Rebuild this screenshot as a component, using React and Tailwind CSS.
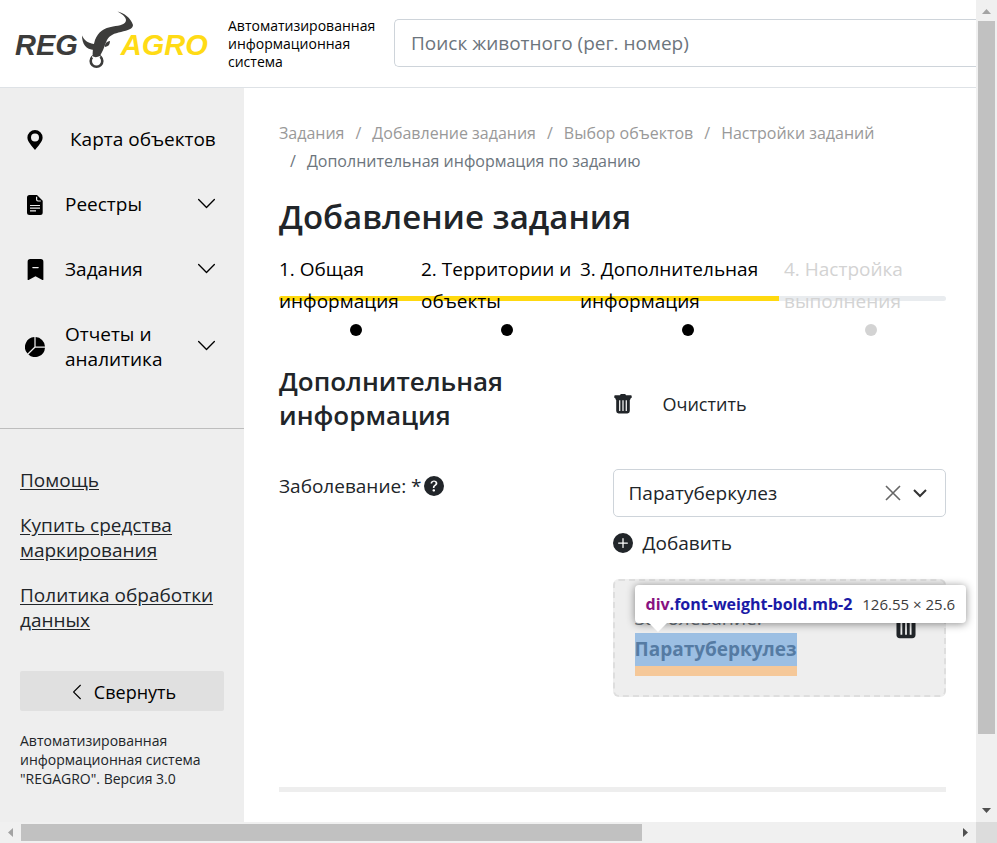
import {
  BsBookmarkDashFill,
  BsChevronDown,
  BsChevronLeft,
  BsPieChartFill,
  BsPlusCircleFill,
  BsQuestionCircleFill,
} from "react-icons/bs";

function PinIcon() {
  return (
    <svg width="20" height="20" viewBox="0 0 20 20" fill="currentColor" aria-hidden="true">
      <path
        fillRule="evenodd"
        d="M10 0a7.6 7.6 0 0 0-7.6 7.6C2.4 12 7 16 10 20c3-4 7.600-8 7.600-12.400A7.600 7.600 0 0 0 10 0Zm0 3.400a4 4 0 1 1 0 8 4 4 0 0 1 0-8Z"
      />
    </svg>
  );
}

function FileIcon() {
  return (
    <svg width="20" height="20" viewBox="0 0 20 20" aria-hidden="true">
      <path d="M4.500 0H12l5.700 5.700V17.500a2.500 2.500 0 0 1-2.500 2.500H4.500A2.500 2.500 0 0 1 2 17.500v-15A2.500 2.500 0 0 1 4.500 0Z" fill="#000" />
      <path d="M11.600 1.800v2.800c0 .8.600 1.400 1.400 1.400h2.800" stroke="#eee" strokeWidth="1.200" fill="none" />
      <path d="M5 10.500h10M5 13.200h10M5 15.900h6" stroke="#eee" strokeWidth="1.200" />
    </svg>
  );
}

function TrashIcon({ size }) {
  return (
    <svg width={size} height={size} viewBox="0 0 20 20" aria-hidden="true" className="shrink-0">
      <path d="M7 1.200C7.200.4 7.800 0 8.600 0h2.800c.8 0 1.400.4 1.600 1.200h4.900c.5 0 .8.300.8.800v1.400c0 .4-.3.700-.8.700L17 6H3l-.9-1.900c-.5 0-.8-.3-.8-.7V2c0-.5.300-.8.800-.8Z" fill="#212529" />
      <path d="M3.200 4h13.600v13a2.400 2.400 0 0 1-2.400 2.400H5.600A2.400 2.400 0 0 1 3.200 17Z" fill="#212529" />
      <path d="M6.700 6.200V17M10 6.200V17M13.300 6.200V17" stroke="#eee" strokeWidth="1.300" />
    </svg>
  );
}

function Logo() {
  return (
    <a
      href="#"
      aria-label="REGAGRO"
      className="flex w-[213px] shrink-0 items-center font-['Liberation_Sans',Arial,sans-serif] text-[29px] leading-none font-bold italic"
    >
      <span className="mt-1 text-[#3c3c3b]">REG</span>
      <svg width="54" height="60" viewBox="0 0 54 60" className="mr-[-14px] mb-[6px] ml-[3px] shrink-0" aria-hidden="true">
        <path
          fill="#3c3c3b"
          d="M36.500 1.500C43 3 50 8 52 15c0 4-5 5-12 7-7 1.500-11 3-14 8-2 4-3 9-6 14l-2 4h-6c-1-5 0-12 2-18 3-8 9-12 18-13.500 7-1 13-2 13-6.500 0-3-4-6-8.500-8.500Z"
        />
        <path fill="#3c3c3b" d="M1 25.500c2 4 5 7.500 12 8.500v6C5 39.500 1 34 1 25.500Z" />
        <path fill="#3c3c3b" d="M29 31c0 3.500-1.500 5.500-5 6-.5-3 1.500-5.500 5-6Z" />
        <circle cx="15.500" cy="51" r="5.800" fill="none" stroke="#3c3c3b" strokeWidth="2.600" />
        <path fill="#fff" d="M11 46c2.500 1.500 5 1.500 8 0l.5 1c-2.500 2-6 2-8.500.5Z" />
      </svg>
      <span className="mt-1 text-[#ffdb15]">AGRO</span>
    </a>
  );
}

function NavItem({ icon, children, expandable = true }) {
  return (
    <li>
      <button type="button" className="flex w-full items-center py-5 pr-[27px] pl-[25px] text-left text-[19px] leading-[25px] text-black">
        <span className="flex w-5 shrink-0 justify-center">{icon}</span>
        <span className={expandable ? "ml-5 flex-1" : "ml-[25px] flex-1 whitespace-nowrap"}>{children}</span>
        {expandable && <BsChevronDown size={21} className="mb-[3px] shrink-0" />}
      </button>
    </li>
  );
}

function Sidebar() {
  return (
    <aside className="w-[244px] shrink-0 bg-[#eee] pt-[19px]">
      <nav>
        <ul>
          <NavItem icon={<PinIcon />} expandable={false}>Карта объектов</NavItem>
          <NavItem icon={<FileIcon />}>Реестры</NavItem>
          <NavItem icon={<BsBookmarkDashFill size={21} className="shrink-0" />}>Задания</NavItem>
          <NavItem icon={<BsPieChartFill size={20} />}>Отчеты и аналитика</NavItem>
        </ul>
      </nav>
      <div className="mt-9 border-t border-[#bdbdbd] px-5 pt-[39px]">
        <div className="flex flex-col items-start gap-5 text-[19px] leading-[25px] underline underline-offset-2">
          <a href="#">Помощь</a>
          <a href="#">Купить средства маркирования</a>
          <a href="#">Политика обработки данных</a>
        </div>
        <button type="button" className="mt-[38px] flex h-10 w-full items-center justify-center gap-2 rounded-xs bg-[#e0e0e0] pt-[2px] text-[18px] text-black">
          <BsChevronLeft size={18} />
          Свернуть
        </button>
        <p className="mt-5 text-[14px] leading-[19px]">
          Автоматизированная информационная система &quot;REGAGRO&quot;. Версия 3.0
        </p>
      </div>
    </aside>
  );
}

const crumbs = ["Задания", "Добавление задания", "Выбор объектов", "Настройки заданий"];

const steps = [
  { title: "1. Общая информация", done: true },
  { title: "2. Территории и объекты", done: true },
  { title: "3. Дополнительная информация", done: true },
  { title: "4. Настройка выполнения", done: false },
];

function Stepper() {
  return (
    <div className="relative mt-4">
      <div className="absolute inset-x-0 top-[43px] h-[5px] overflow-hidden rounded-sm bg-[#e9ecef]">
        <div className="h-full w-3/4 bg-[#ffd90f]" />
      </div>
      <ol className="relative grid grid-cols-[142fr_159fr_204fr_162fr] text-[19px] leading-8">
        {steps.map((step) => (
          <li key={step.title} className={step.done ? "text-black" : "text-[#d3d3d3]"}>
            <div className="pr-1">{step.title}</div>
            <div className="mt-[7px] ml-[50%] size-3 rounded-full bg-current" />
          </li>
        ))}
      </ol>
    </div>
  );
}

function DiseaseCard() {
  return (
    <div className="relative mt-5 flex items-start justify-between rounded-md border-2 border-dashed border-[#dedede] bg-[#eee] px-5 pt-[22px] pb-[19px]">
      <div className="text-[19px]">
        <div className="leading-[30px] text-[#6c757d]">Заболевание:</div>
        <div className="border-b-10 border-[#f5c899] bg-[#9cbfe3] leading-[33px] font-bold text-[#557ba3]">Паратуберкулез</div>
      </div>
      <button type="button" aria-label="Удалить" className="mt-2 mr-1">
        <TrashIcon size={28} />
      </button>
      <div className="absolute top-1 left-5 flex h-[38px] items-center gap-[10px] rounded-sm bg-white px-[11px] text-[15px] whitespace-nowrap shadow-[0_1px_8px_rgba(0,0,0,0.45)]">
        <span className="text-[16px] font-bold text-[#1a1aa6]">
          <span className="text-[#881280]">div</span>.font-weight-bold.mb-2
        </span>
        <span className="text-[#3c3c3c]">126.55 × 25.6</span>
        <svg width="18" height="9" viewBox="0 0 18 9" className="absolute top-full left-[14px]" aria-hidden="true">
          <path d="M0 0h18L9 9Z" fill="#fff" />
        </svg>
      </div>
    </div>
  );
}

function Main() {
  return (
    <main className="min-w-0 flex-1 pt-[31px] pr-[30px] pl-[35px]">
      <nav aria-label="breadcrumb">
        <ol className="flex flex-wrap text-[16px] leading-7 text-[#999]">
          {crumbs.map((crumb, i) => (
            <li key={crumb} className="flex">
              {i > 0 && <span className="px-[11px]">/</span>}
              <a href="#">{crumb}</a>
            </li>
          ))}
          <li className="flex text-[#6c757d]" aria-current="page">
            <span className="px-[11px]">/</span>
            Дополнительная информация по заданию
          </li>
        </ol>
      </nav>
      <h1 className="mt-[22px] text-[33px] leading-10 font-semibold">Добавление задания</h1>
      <Stepper />
      <div className="mt-7 grid grid-cols-2 items-center">
        <h2 className="pr-5 text-[26px] leading-[34px] font-semibold">Дополнительная информация</h2>
        <button type="button" className="mt-3 flex items-center gap-[30px] text-[18px]">
          <TrashIcon size={20} />
          Очистить
        </button>
      </div>
      <div className="mt-[37px] grid grid-cols-2 items-start">
        <label htmlFor="disease" className="flex items-center gap-[2px] text-[19px] leading-[34px]">
          Заболевание: *
          <BsQuestionCircleFill size={20} />
        </label>
        <div>
          <div className="relative">
            <select id="disease" className="h-12 w-full appearance-none rounded-[5px] border border-[#ced4da] bg-white px-[15px] text-[19px]">
              <option>Паратуберкулез</option>
            </select>
            <div className="pointer-events-none absolute inset-y-0 right-[19px] flex items-center gap-3">
              <svg width="16" height="16" viewBox="0 0 16 16" stroke="#666" strokeWidth="1.600" aria-hidden="true">
                <path d="m1 1 14 14M15 1 1 15" />
              </svg>
              <svg width="14" height="9" viewBox="0 0 14 9" fill="none" stroke="#333" strokeWidth="2" aria-hidden="true">
                <path d="m1 1 6 6 6-6" />
              </svg>
            </div>
          </div>
          <button type="button" className="mt-[10px] flex h-8 items-center gap-[10px] text-[19px]">
            <BsPlusCircleFill size={20} />
            Добавить
          </button>
          <DiseaseCard />
        </div>
      </div>
      <div className="mt-[90px] h-[5px] bg-[#eee]" />
    </main>
  );
}

function Arrow({ path, color }) {
  return (
    <svg width="21" height="21" viewBox="0 0 21 21" fill={color} className="shrink-0" aria-hidden="true">
      <path d={path} />
    </svg>
  );
}

export default function App() {
  return (
    <div className="grid h-screen grid-cols-[minmax(0,1fr)_21px] grid-rows-[minmax(0,1fr)_21px] bg-white font-['Open_Sans','Noto_Sans',sans-serif] text-[#212529]">
      <div className="flex min-h-0 flex-col overflow-hidden">
        <header className="flex h-[88px] shrink-0 items-center border-b border-[#dee2e6] pb-px pl-[15px]">
          <Logo />
          <p className="w-[166px] shrink-0 pt-px pr-3 text-[14px] leading-[18px] text-black">
            Автоматизированная информационная система
          </p>
          <input
            type="search"
            aria-label="Поиск животного"
            placeholder="Поиск животного (рег. номер)"
            className="h-12 min-w-0 flex-1 rounded-l-[5px] border border-r-0 border-[#ced4da] px-4 text-[19px] placeholder:text-[#6c757d]"
          />
        </header>
        <div className="flex min-h-0 flex-1">
          <Sidebar />
          <Main />
        </div>
      </div>
      <div className="flex flex-col items-center bg-[#f0f0f0]">
        <Arrow path="M6 14h9l-4.500-5Z" color="#a3a3a3" />
        <div className="min-h-0 w-full flex-1 px-[2px]">
          <div className="h-[91.4%] bg-[#c1c1c1]" />
        </div>
        <Arrow path="M6 7h9l-4.500 5Z" color="#505050" />
      </div>
      <div className="flex items-center bg-[#f0f0f0]">
        <Arrow path="M13 6v9l-5-4.500Z" color="#a3a3a3" />
        <div className="h-full min-w-0 flex-1 py-[2px]">
          <div className="h-full w-[66.5%] bg-[#c1c1c1]" />
        </div>
        <Arrow path="M8 6v9l5-4.500Z" color="#505050" />
      </div>
      <div className="bg-[#dcdcdc]" />
    </div>
  );
}
